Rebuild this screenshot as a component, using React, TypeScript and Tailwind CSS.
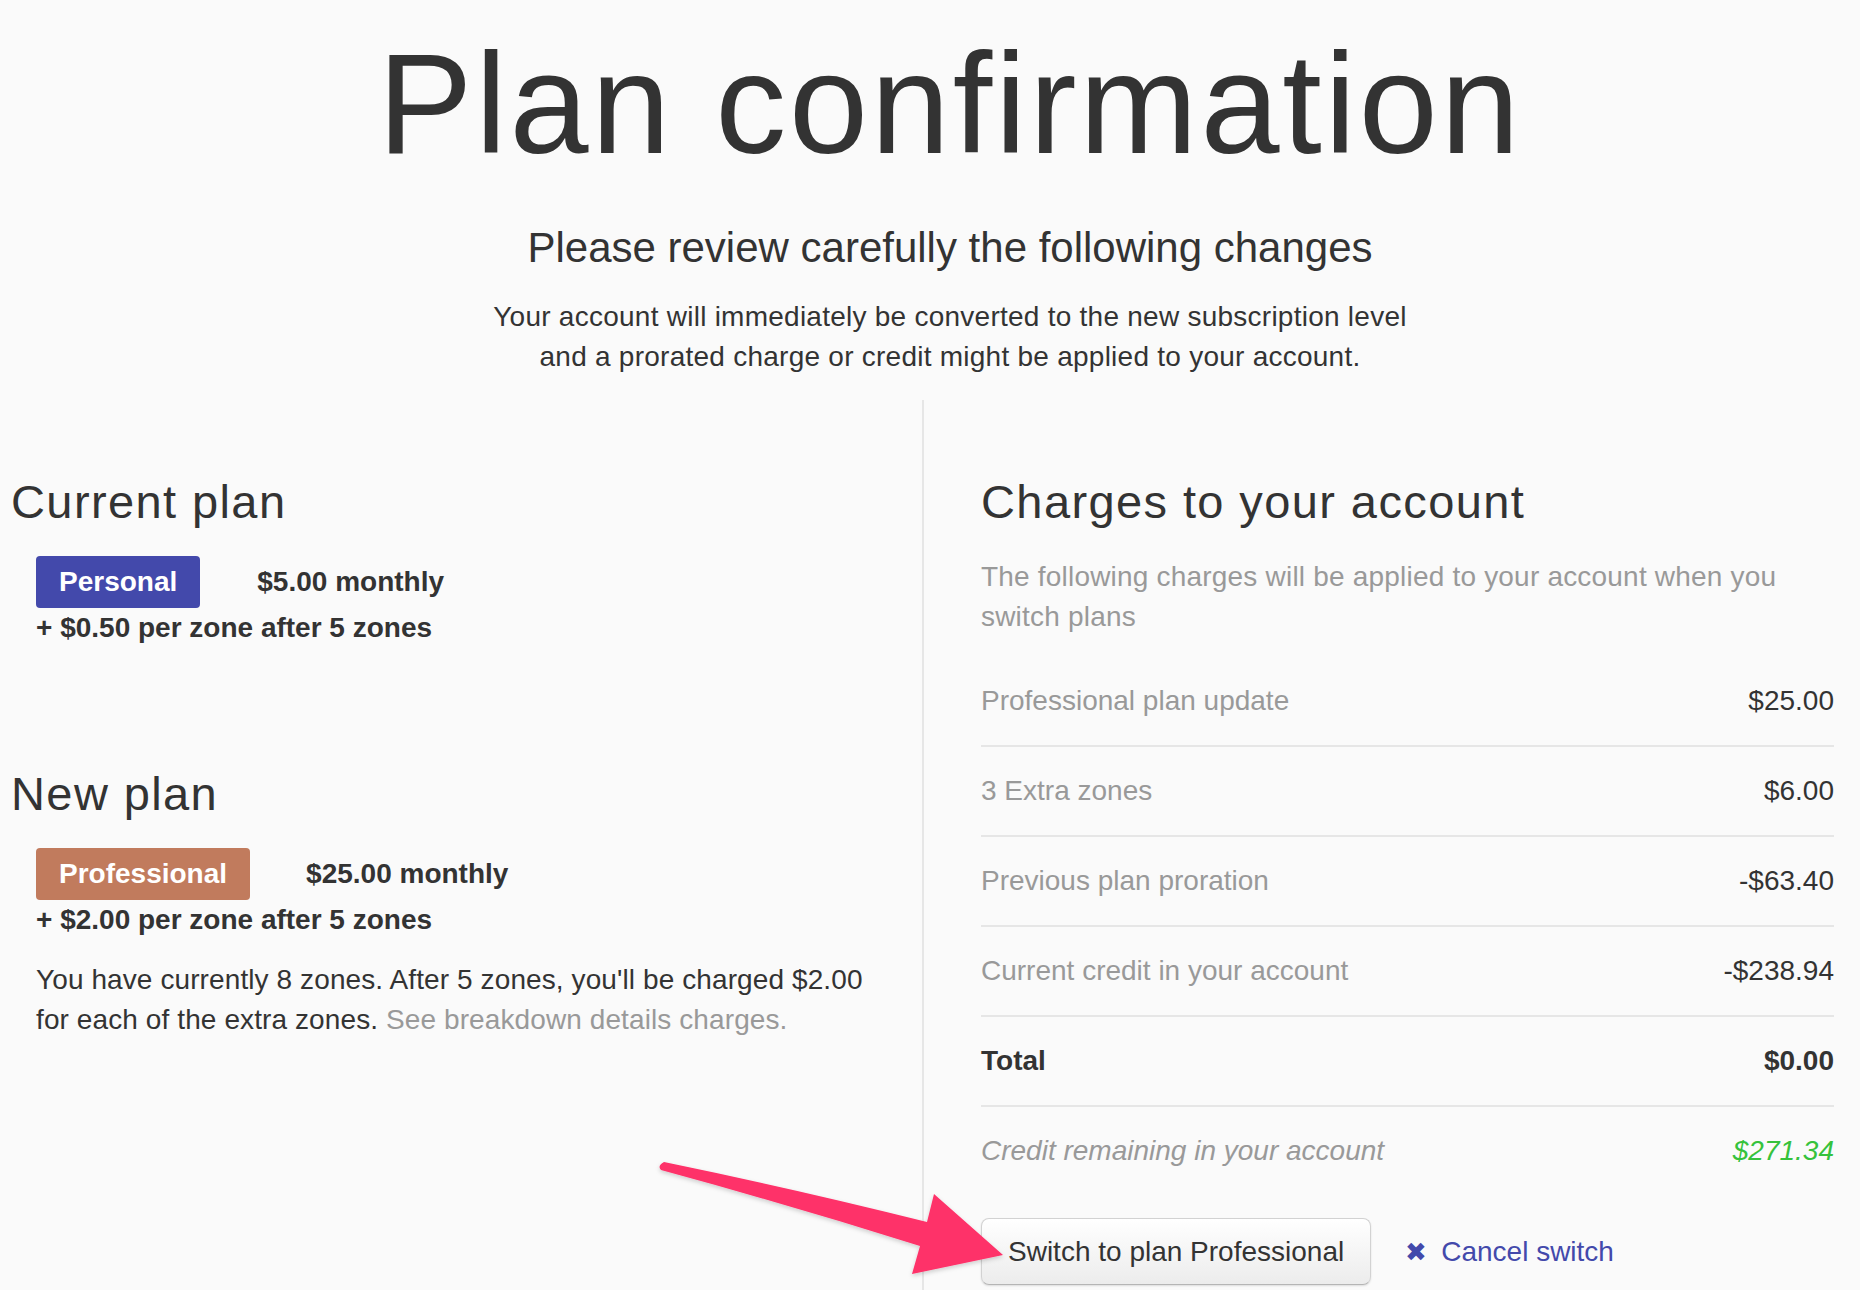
import React from "react";

const rows = [
  { label: "Professional plan update", value: "$25.00" },
  { label: "3 Extra zones", value: "$6.00" },
  { label: "Previous plan proration", value: "-$63.40" },
  { label: "Current credit in your account", value: "-$238.94" },
];

function Arrow() {
  return (
    <svg
      className="absolute left-0 top-0 pointer-events-none"
      width="1860"
      height="1290"
      viewBox="0 0 1860 1290"
    >
      <defs>
        <filter id="sh" x="-10%" y="-10%" width="120%" height="130%">
          <feDropShadow dx="0" dy="2" stdDeviation="2" floodColor="#000" floodOpacity="0.18" />
        </filter>
      </defs>
      <path
        d="M664 1162 Q800 1190 927 1222 L934 1194 L1003 1255 L912 1274 L920 1246 Q790 1205 661 1170 Q657 1166 664 1162 Z"
        fill="#fe3169"
        filter="url(#sh)"
      />
    </svg>
  );
}

export default function App() {
  return (
    <div className="relative min-h-[1290px] flex flex-col bg-[#fafafa] text-[#333] font-['Liberation_Sans',Arial,sans-serif] overflow-hidden">
      <header className="pl-[40px] text-center pt-[33px]">
        <h1 className="text-[142px] leading-none tracking-[2.8px] font-normal">Plan confirmation</h1>
        <h2 className="mt-[48px] text-[42px] leading-[50px] font-normal">
          Please review carefully the following changes
        </h2>
        <p className="mt-[24px] text-[28px] leading-[40px] tracking-[0.25px]">
          Your account will immediately be converted to the new subscription level
          <br />
          and a prorated charge or credit might be applied to your account.
        </p>
      </header>

      <div className="mt-[23px] flex flex-1">
        <div className="w-[924px] shrink-0 border-r-2 border-[#e6e6e6] pl-[11px]">
          <section className="pt-[74px]">
            <h3 className="text-[47px] leading-[56px] tracking-[1.4px] font-normal">Current plan</h3>
            <div className="mt-[26px] ml-[25px] text-[28px] font-bold">
              <div className="flex items-center">
                <span className="h-[52px] px-[23px] leading-[52px] rounded-[4px] bg-[#4349ab] text-white">
                  Personal
                </span>
                <span className="ml-[57px]">$5.00 monthly</span>
              </div>
              <div className="pt-[2px] leading-[36px]">+ $0.50 per zone after 5 zones</div>
            </div>
          </section>

          <section className="mt-[120px]">
            <h3 className="text-[47px] leading-[56px] tracking-[1.4px] font-normal">New plan</h3>
            <div className="mt-[26px] ml-[25px] text-[28px] font-bold">
              <div className="flex items-center">
                <span className="h-[52px] px-[23px] leading-[52px] rounded-[4px] bg-[#c17b5d] text-white">
                  Professional
                </span>
                <span className="ml-[56px]">$25.00 monthly</span>
              </div>
              <div className="pt-[2px] leading-[36px]">+ $2.00 per zone after 5 zones</div>
            </div>
            <p className="mt-[22px] ml-[25px] w-[850px] text-[28px] leading-[40px] tracking-[0.1px]">
              You have currently 8 zones. After 5 zones, you'll be charged $2.00 for each of the extra zones.{" "}
              <a className="text-[#999]">See breakdown details charges.</a>
            </p>
          </section>
        </div>

        <div className="flex-1 pl-[57px] pr-[26px]">
          <section className="pt-[74px]">
            <h3 className="text-[47px] leading-[56px] tracking-[1.4px] font-normal">Charges to your account</h3>
            <p className="mt-[27px] text-[28px] leading-[40px] tracking-[0.2px] text-[#999]">
              The following charges will be applied to your account when you switch plans
            </p>
            <div className="mt-[20px] text-[28px] leading-[40px]">
              {rows.map((r) => (
                <div
                  key={r.label}
                  className="flex justify-between py-[24px] border-b-2 border-[#e6e6e6]"
                >
                  <span className="text-[#999]">{r.label}</span>
                  <span>{r.value}</span>
                </div>
              ))}
              <div className="flex justify-between py-[24px] border-b-2 border-[#e6e6e6] font-bold">
                <span>Total</span>
                <span>$0.00</span>
              </div>
              <div className="flex justify-between py-[24px] italic">
                <span className="text-[#999]">Credit remaining in your account</span>
                <span className="text-[#36c23c]">$271.34</span>
              </div>
            </div>
            <div className="mt-[23px] flex items-center text-[28px] leading-[40px]">
              <button className="pt-[13px] pb-[12px] px-[26px] rounded-[8px] border border-[#d2d2d2] border-b-[#b5b5b5] bg-gradient-to-b from-white to-[#ececec] shadow-[0_1px_2px_rgba(0,0,0,0.12)] text-[#333]">
                Switch to plan Professional
              </button>
              <a className="ml-[34px] flex items-center text-[#4349ab]">
                <span className="text-[26px] leading-[40px] mr-[14px]">✖</span>
                Cancel switch
              </a>
            </div>
          </section>
        </div>
      </div>
      <Arrow />
    </div>
  );
}
